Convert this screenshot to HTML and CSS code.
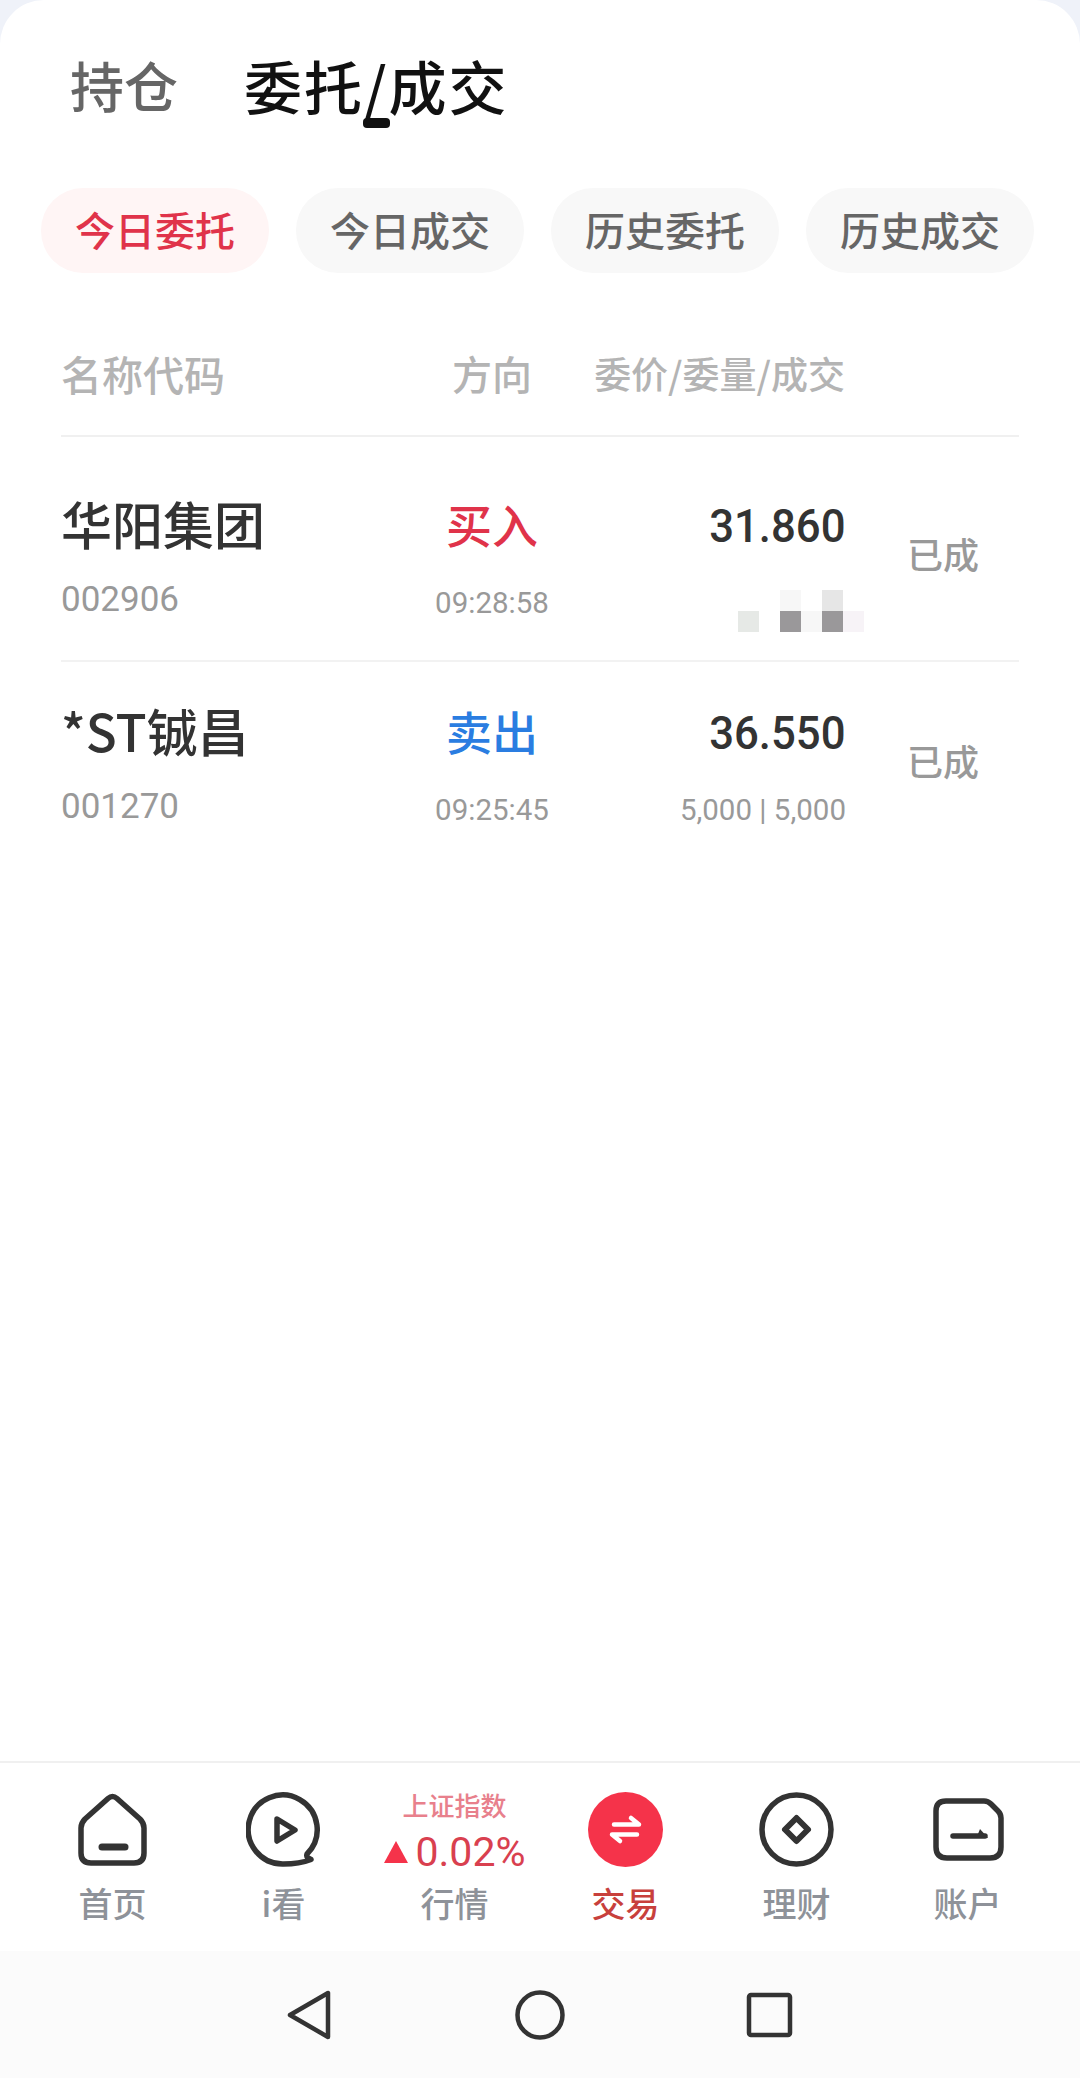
FILE: index.html
```html
<!DOCTYPE html>
<html lang="zh-CN">
<head>
<meta charset="utf-8">
<title>委托/成交</title>
<link rel="stylesheet" href="styles.css">
</head>
<body>
<main class="screen">
  <header class="titles">
    <span class="title">持仓</span>
    <span class="title title-on">委托/成交<i class="title-mark"></i></span>
  </header>
  <nav class="pills">
    <span class="pill pill-on">今日委托</span>
    <span class="pill">今日成交</span>
    <span class="pill">历史委托</span>
    <span class="pill">历史成交</span>
  </nav>
  <section class="table">
    <div class="head">
      <span class="head-name">名称代码</span>
      <span class="head-dir">方向</span>
      <span class="head-price">委价/委量/成交</span>
    </div>
    <div class="rows">
      <div class="row row-line">
        <div class="cell-name"><div class="name">华阳集团</div><div class="code">002906</div></div>
        <div class="cell-dir"><div class="dir dir-buy">买入</div><div class="time">09:28:58</div></div>
        <div class="cell-price">
          <div class="price">31.860</div>
          <div class="mosaic">
            <i></i><i></i><i class="m-f7"></i><i></i><i class="m-e6"></i><i></i>
            <i class="m-e9"></i><i></i><i class="m-98"></i><i class="m-f7"></i><i class="m-98"></i><i class="m-f3"></i>
          </div>
        </div>
        <div class="status">已成</div>
      </div>
      <div class="row">
        <div class="cell-name"><div class="name">*ST铖昌</div><div class="code">001270</div></div>
        <div class="cell-dir"><div class="dir dir-sell">卖出</div><div class="time">09:25:45</div></div>
        <div class="cell-price">
          <div class="price">36.550</div>
          <div class="qty">5,000 | 5,000</div>
        </div>
        <div class="status">已成</div>
      </div>
    </div>
  </section>
  <div class="spacer"></div>
  <footer class="tabbar">
    <div class="tab">
      <svg class="tab-icon" viewBox="0 0 75 75"><path class="ln" d="M33 6.5Q37.5 2.5 42 6.5L65 27Q69 31 69 36V61Q69 71 59 71H16Q6 71 6 61V36Q6 31 10 27Z"/><path class="ln ln-7" d="M27 55H50"/></svg>
      <span class="tab-label">首页</span>
    </div>
    <div class="tab">
      <svg class="tab-icon" viewBox="0 0 75 75"><path class="ln" d="M61 62A34.5 34.5 0 1 0 37.5 72C46 72 56 71 65 67.5C62 66 60 65 61 62Z"/><path class="ln" d="M31 27L49 38L31 49Z"/></svg>
      <span class="tab-label">i看</span>
    </div>
    <div class="tab">
      <div class="quote">
        <span class="quote-name">上证指数</span>
        <span class="quote-val"><svg class="quote-up" viewBox="0 0 22 20"><path d="M11 0L22 20H0Z"/></svg>0.02%</span>
      </div>
      <span class="tab-label">行情</span>
    </div>
    <div class="tab">
      <svg class="tab-icon" viewBox="0 0 75 75"><circle class="trade-bg" cx="37.5" cy="37.5" r="37.5"/><path class="trade-ar" d="M26 32.5H51L43 26M49 42.5H24L32 49"/></svg>
      <span class="tab-label tab-label-on">交易</span>
    </div>
    <div class="tab">
      <svg class="tab-icon" viewBox="0 0 75 75"><circle class="ln" cx="37.5" cy="37.5" r="34.5"/><path class="ln ln-6" d="M37.5 26L49 37.5L37.5 49L26 37.5Z"/></svg>
      <span class="tab-label">理财</span>
    </div>
    <div class="tab">
      <svg class="tab-icon" viewBox="0 0 75 75"><path class="ln" d="M16 9H54Q58 9 61 12L68 19Q71 22 71 26V55Q71 66 60 66H17Q6 66 6 55V19Q6 9 16 9Z"/><path class="ln" d="M23 44H55"/><path class="fill-dark" d="M48 42L50 37L58 46H48Z"/></svg>
      <span class="tab-label">账户</span>
    </div>
  </footer>
  <div class="sysnav">
    <svg class="sys-icon" viewBox="0 0 50 50"><path class="sys-ln" d="M6 25L44 3V47Z"/></svg>
    <svg class="sys-icon" viewBox="0 0 50 50"><circle class="sys-ln" cx="25" cy="25" r="22.5"/></svg>
    <svg class="sys-icon" viewBox="0 0 50 50"><rect class="sys-ln" x="3" y="5" width="41" height="40" rx="2"/></svg>
  </div>
</main>
</body>
</html>
```
FILE: styles.css
```css
* { box-sizing: border-box; }
html, body { margin: 0; height: 100%; }
body {
  background: #eff2f9;
  font-family: "Noto Sans CJK SC", "Noto Sans", sans-serif;
  color: #333;
}
.screen {
  height: 2078px;
  display: flex;
  flex-direction: column;
  background: #fff;
  border-radius: 44px 44px 0 0;
  overflow: hidden;
}
.titles {
  display: flex;
  gap: 66px;
  padding: 49px 0 0 70px;
  height: 188px;
}
.title {
  font-size: 54px;
  font-weight: 500;
  line-height: 72px;
  color: #666;
  position: relative;
  height: 72px;
}
.title-on {
  font-size: 58px;
  letter-spacing: 2px;
  color: #111;
}
.title-mark {
  position: absolute;
  left: 119px;
  top: 69px;
  width: 27px;
  height: 10px;
  border-radius: 4px;
  background: #111;
}
.pills {
  display: flex;
  gap: 27px;
  padding-left: 41px;
}
.pill {
  width: 228px;
  height: 85px;
  border-radius: 42px;
  background: #f8f8f8;
  color: #666;
  font-size: 40px;
  font-weight: 500;
  line-height: 83px;
  text-align: center;
}
.pill-on {
  background: #fff5f5;
  color: #e0334a;
}
.table { margin: 0 61px; }
.head {
  display: grid;
  grid-template-columns: 319px 224px 241px 1fr;
  height: 164px;
  padding-top: 73px;
  border-bottom: 2px solid #f0f0f0;
  color: #b4b4b4;
  line-height: 54px;
  font-weight: 500;
}
.head-name { font-size: 41px; }
.head-dir { font-size: 40px; text-align: center; }
.head-price { font-size: 37px; justify-self: end; white-space: nowrap; }
.rows { padding-top: 18px; }
.row {
  display: grid;
  grid-template-columns: 319px 224px 242px 1fr;
  height: 207px;
  padding-top: 41px;
}
.row-line { border-bottom: 2px solid #f2f2f2; }
.cell-name, .cell-dir, .cell-price {
  display: flex;
  flex-direction: column;
}
.cell-dir { align-items: center; }
.cell-price { align-items: flex-end; }
.name {
  font-size: 51px;
  font-weight: 500;
  line-height: 60px;
  margin-top: -3px;
  color: #333;
}
.code {
  font-family: Roboto, sans-serif;
  font-size: 35px;
  line-height: 60px;
  margin-top: 17px;
  color: #999;
}
.dir {
  font-size: 46px;
  font-weight: 500;
  line-height: 60px;
  margin-top: -3px;
}
.dir-buy { color: #e0334a; }
.dir-sell { color: #2a7de1; }
.time, .qty {
  font-family: Roboto, sans-serif;
  font-size: 29.5px;
  line-height: 60px;
  color: #999;
  white-space: nowrap;
}
.time { margin-top: 20px; }
.qty { margin-top: 17px; }
.price {
  font-family: Roboto, sans-serif;
  font-size: 46px;
  font-weight: 500;
  line-height: 60px;
  color: #333;
  transform: scaleX(0.95);
  transform-origin: right center;
}
.mosaic {
  display: grid;
  grid-template-columns: repeat(6, 21px);
  grid-auto-rows: 21px;
  margin-top: 34px;
  margin-right: -18px;
}
.m-f7 { background: #f7f7f7; }
.m-e6 { background: #e6e6e6; }
.m-e9 { background: #e6e9e6; }
.m-98 { background: #9a989a; }
.m-f3 { background: #f7f3f7; }
.status {
  font-size: 36px;
  font-weight: 500;
  line-height: 50px;
  margin-top: 32px;
  padding-left: 61px;
  color: #999;
}
.spacer { flex: 1; }
.tabbar {
  height: 190px;
  display: grid;
  grid-template-columns: repeat(6, 171px);
  padding: 29px 0 0 27px;
  border-top: 2px solid #f0f0f0;
}
.tab {
  display: flex;
  flex-direction: column;
  align-items: center;
}
.tab-icon {
  width: 75px;
  height: 75px;
  flex: none;
}
.tab-label {
  font-size: 34px;
  font-weight: 500;
  line-height: 44px;
  margin-top: 14px;
  color: #8e9299;
}
.tab-label-on { color: #c8403c; }
.ln {
  fill: none;
  stroke: #333;
  stroke-width: 5.5;
  stroke-linejoin: round;
  stroke-linecap: round;
}
.ln-7 { stroke-width: 7; }
.ln-6 { stroke-width: 6; }
.fill-dark { fill: #333; }
.trade-bg { fill: #f5334a; }
.trade-ar {
  fill: none;
  stroke: #fff;
  stroke-width: 4.5;
  stroke-linejoin: round;
  stroke-linecap: round;
}
.quote {
  height: 75px;
  flex: none;
  display: flex;
  flex-direction: column;
  align-items: center;
}
.quote-name {
  font-size: 26px;
  font-weight: 500;
  line-height: 26px;
  color: #e8808c;
}
.quote-val {
  display: flex;
  align-items: center;
  gap: 8px;
  margin-top: 16px;
  font-family: Roboto, sans-serif;
  font-size: 41px;
  line-height: 36px;
  color: #d9404f;
  white-space: nowrap;
}
.quote-up {
  width: 24px;
  height: 22px;
  fill: #f5334a;
}
.sysnav {
  height: 127px;
  background: #fbfbfb;
  display: flex;
  align-items: center;
  gap: 181px;
  padding-left: 284px;
}
.sys-icon {
  width: 50px;
  height: 50px;
}
.sys-ln {
  fill: none;
  stroke: #333;
  stroke-width: 4.5;
  stroke-linejoin: round;
}
```
